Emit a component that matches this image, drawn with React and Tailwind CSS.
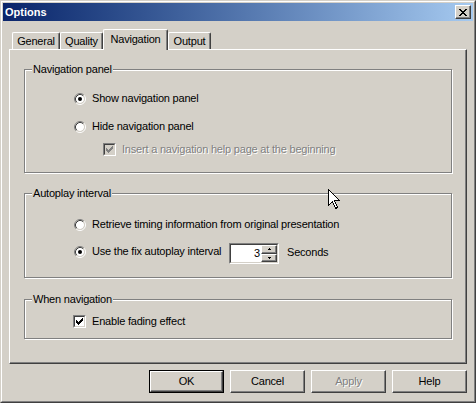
import React from "react";

const Radio = ({ checked }) => (
  <svg width="12" height="12" viewBox="0 0 12 12" className="shrink-0 block">
    <circle cx="6" cy="6" r="4" fill="#fff" />
    <path d="M2.11 9.89 A5.5 5.5 0 0 1 9.89 2.11" stroke="#808080" fill="none" />
    <path d="M9.89 2.11 A5.5 5.5 0 0 1 2.11 9.89" stroke="#fff" fill="none" />
    <path d="M2.82 9.18 A4.5 4.5 0 0 1 9.18 2.82" stroke="#404040" fill="none" />
    <path d="M9.18 2.82 A4.5 4.5 0 0 1 2.82 9.18" stroke="#d4d0c8" fill="none" />
    {checked && <circle cx="6" cy="6" r="2" fill="#000" />}
  </svg>
);

const checkCols = [
  [1, 3], [2, 4], [3, 5], [4, 4], [5, 3], [6, 2], [7, 1],
];

const Check = ({ disabled }) => (
  <div className="w-[13px] h-[13px] shrink-0 border border-t-[#808080] border-l-[#808080] border-r-white border-b-white">
    <div
      className={`w-full h-full border border-t-[#404040] border-l-[#404040] border-r-[#d4d0c8] border-b-[#d4d0c8] ${
        disabled ? "bg-[#d4d0c8]" : "bg-white"
      }`}
    >
      <svg width="9" height="9" viewBox="0 0 9 9" className="block" shapeRendering="crispEdges">
        {checkCols.map(([x, y]) => (
          <rect key={x} x={x} y={y} width="1" height="3" fill={disabled ? "#808080" : "#000"} />
        ))}
      </svg>
    </div>
  </div>
);

const Group = ({ label, className, children }) => (
  <div
    className={`relative w-[428px] border border-[#808080] shadow-[inset_1px_1px_0_#fff,1px_1px_0_#fff] ${className}`}
  >
    <span className="absolute left-[7px] top-[-7px] px-[1px] bg-[#d4d0c8] leading-[13px] whitespace-nowrap">
      {label}
    </span>
    {children}
  </div>
);

const Button = ({ children, def, disabled }) => (
  <div className={`w-[75px] h-[23px] ${def ? "border border-black" : ""}`}>
    <div className="w-full h-full border border-t-white border-l-white border-r-[#404040] border-b-[#404040] shadow-[inset_-1px_-1px_0_#808080] flex items-center justify-center">
      <span
        className={
          disabled
            ? "text-[#808080] [text-shadow:1px_1px_0_#fff]"
            : "text-black"
        }
      >
        {children}
      </span>
    </div>
  </div>
);

const SpinBtn = ({ up }) => (
  <div className="flex-1 border border-t-white border-l-white border-r-[#404040] border-b-[#404040] shadow-[inset_-1px_-1px_0_#808080] bg-[#d4d0c8] flex items-center justify-center">
    <svg width="5" height="3" viewBox="0 0 5 3" className="block" shapeRendering="crispEdges">
      {up ? (
        <>
          <rect x="2" y="0" width="1" height="1" fill="#000" />
          <rect x="1" y="1" width="3" height="1" fill="#000" />
        </>
      ) : (
        <>
          <rect x="1" y="1" width="3" height="1" fill="#000" />
          <rect x="2" y="2" width="1" height="1" fill="#000" />
        </>
      )}
    </svg>
  </div>
);

const Tab = ({ children, selected, w }) => (
  <div
    className={`${w} relative border-t border-l border-t-white border-l-white border-r border-r-[#404040] shadow-[inset_-1px_0_0_#808080] rounded-tl-[2px] rounded-tr-[2px] bg-[#d4d0c8] flex justify-center ${
      selected ? "h-[21px] mb-[-1px] z-10 pt-[3px]" : "h-[17px] pt-[2px]"
    }`}
  >
    {children}
  </div>
);

export default function App() {
  return (
    <div className="relative w-[476px] h-[403px] bg-[#d4d0c8] border border-t-[#d4d0c8] border-l-[#d4d0c8] border-r-[#404040] border-b-[#404040] font-['Liberation_Sans',Arial,sans-serif] text-[11px] leading-[13px] tracking-[-0.2px] text-black overflow-hidden select-none">
      <div className="h-full border border-t-white border-l-white border-r-[#808080] border-b-[#808080] p-[1px] flex flex-col">
        {/* Title bar */}
        <div className="h-[18px] bg-gradient-to-r from-[#0a246a] to-[#a6caf0] flex items-center justify-between pl-[2px] pr-[2px]">
          <span className="text-white font-bold text-[11px] leading-[13px] tracking-normal">Options</span>
          <div className="w-[16px] h-[14px] border border-t-white border-l-white border-r-[#404040] border-b-[#404040] shadow-[inset_-1px_-1px_0_#808080] bg-[#d4d0c8] flex items-center justify-center">
            <svg width="8" height="7" viewBox="0 0 8 7" className="block" shapeRendering="crispEdges">
              {[0, 1, 2, 3, 4, 5, 6].map((i) => (
                <React.Fragment key={i}>
                  <rect x={i} y={i} width="2" height="1" fill="#000" />
                  <rect x={6 - i} y={i} width="2" height="1" fill="#000" />
                </React.Fragment>
              ))}
            </svg>
          </div>
        </div>

        <div className="px-[6px] flex flex-col">
          {/* Tabs */}
          <div className="mt-[8px] h-[20px] flex items-end pl-[3px]">
            <Tab w="w-[48px]">General</Tab>
            <Tab w="w-[43px]">Quality</Tab>
            <Tab w="w-[65px]" selected>
              Navigation
            </Tab>
            <Tab w="w-[43px]">Output</Tab>
          </div>

          {/* Panel */}
          <div className="h-[315px] border-l border-t border-l-white border-t-white border-r border-b border-r-[#404040] border-b-[#404040] shadow-[inset_-1px_-1px_0_#808080] pl-[14px] pt-[19px] flex flex-col">
            <Group label="Navigation panel" className="h-[104px] pt-[22px] pl-[49px]">
              <div className="flex items-center gap-[6px] h-[13px]">
                <Radio checked />
                <span>Show navigation panel</span>
              </div>
              <div className="flex items-center gap-[6px] h-[13px] mt-[15px]">
                <Radio />
                <span>Hide navigation panel</span>
              </div>
              <div className="flex items-center gap-[6px] h-[13px] mt-[10px] ml-[29px]">
                <Check disabled />
                <span className="text-[#808080] [text-shadow:1px_1px_0_#fff]">
                  Insert a navigation help page at the beginning
                </span>
              </div>
            </Group>

            <Group label="Autoplay interval" className="mt-[20px] h-[85px] pt-[24px] pl-[49px]">
              <div className="flex items-center gap-[6px] h-[13px]">
                <Radio />
                <span>Retrieve timing information from original presentation</span>
              </div>
              <div className="flex items-start mt-[12px]">
                <div className="flex items-center gap-[6px] h-[13px] mt-[2px]">
                  <Radio checked />
                  <span className="w-[137px] whitespace-nowrap">Use the fix autoplay interval</span>
                </div>
                <div className="w-[50px] h-[21px] border border-t-[#808080] border-l-[#808080] border-r-white border-b-white">
                  <div className="w-full h-full border border-t-[#404040] border-l-[#404040] border-r-[#d4d0c8] border-b-[#d4d0c8] bg-white flex">
                    <div className="flex-1 text-right pr-[1px] pt-[2px]">3</div>
                    <div className="w-[16px] flex flex-col">
                      <SpinBtn up />
                      <SpinBtn />
                    </div>
                  </div>
                </div>
                <span className="ml-[8px] mt-[3px]">Seconds</span>
              </div>
            </Group>

            <Group label="When navigation" className="mt-[21px] h-[40px] pt-[15px] pl-[48px]">
              <div className="flex items-center gap-[6px] h-[13px]">
                <Check />
                <span>Enable fading effect</span>
              </div>
            </Group>
          </div>

          {/* Buttons */}
          <div className="mt-[6px] flex justify-end gap-[6px]">
            <Button def>OK</Button>
            <Button>Cancel</Button>
            <Button disabled>Apply</Button>
            <Button>Help</Button>
          </div>
        </div>
      </div>

      {/* Mouse cursor */}
      <svg
        width="12"
        height="21"
        viewBox="0 0 12 21"
        className="absolute left-[327px] top-[188px] block"
        shapeRendering="crispEdges"
      >
        <path
          d="M0.5 0.5 L0.5 16.5 L4.5 12.5 L7.5 19.5 L9.5 18.5 L6.5 11.5 L11.5 11.5 Z"
          fill="#fff"
          stroke="#000"
          strokeWidth="1"
        />
      </svg>
    </div>
  );
}
